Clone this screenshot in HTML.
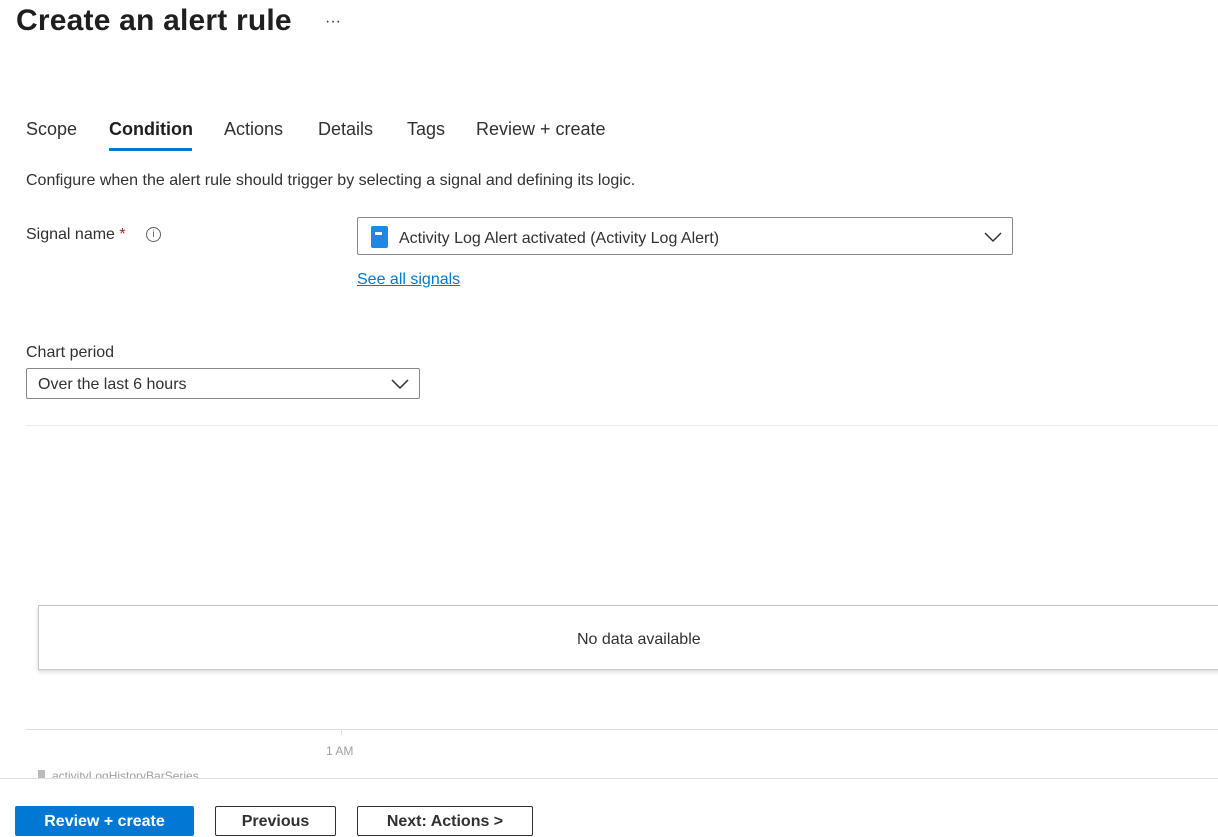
<!DOCTYPE html>
<html><head><style>
body{margin:0;width:1218px;height:830px;overflow:hidden;background:#fff;font-family:"Liberation Sans",sans-serif;color:#323130;position:relative}
.a{position:absolute;white-space:nowrap}
.tab{position:absolute;top:119px;font-size:18px;color:#323130}
.btn{position:absolute;top:806px;height:30px;box-sizing:border-box;border:1px solid #323130;border-radius:2px;font-size:16px;font-weight:bold;text-align:center;line-height:30px}
</style></head><body>
<div class="a" style="left:16px;top:4px;font-size:30px;font-weight:bold;color:#201f1e;letter-spacing:0.2px">Create an alert rule</div>
<div class="a" style="left:325px;top:13px;font-size:16px">···</div>
<div class="tab" style="left:26px">Scope</div>
<div class="tab" style="left:109px;font-weight:bold;color:#201f1e">Condition</div>
<div class="a" style="left:109px;top:148px;width:83px;height:3px;background:#0078d4"></div>
<div class="tab" style="left:224px">Actions</div>
<div class="tab" style="left:318px">Details</div>
<div class="tab" style="left:407px">Tags</div>
<div class="tab" style="left:476px">Review + create</div>
<div class="a" style="left:26px;top:172px;font-size:16px">Configure when the alert rule should trigger by selecting a signal and defining its logic.</div>
<div class="a" style="left:26px;top:226px;font-size:16px">Signal name <span style="color:#a4262c">*</span></div>
<div class="a" style="left:146px;top:227px;width:13px;height:13px;border:1px solid #605e5c;border-radius:50%;font-size:10px;text-align:center;line-height:13px;color:#605e5c">i</div>
<div class="a" style="left:357px;top:217px;width:656px;height:38px;box-sizing:border-box;border:1px solid #8a8886;border-radius:2px"></div>
<div class="a" style="left:371px;top:226px;width:17px;height:22px;background:#1e88e5;border-radius:2px"><div style="position:absolute;left:4px;top:6px;width:7px;height:3px;background:#fff"></div></div>
<div class="a" style="left:399px;top:230px;font-size:16px">Activity Log Alert activated (Activity Log Alert)</div>
<svg class="a" style="left:984px;top:231px" width="18" height="12"><path d="M1 2l8 8 8-8" fill="none" stroke="#323130" stroke-width="1.5"/></svg>
<div class="a" style="left:357px;top:271px;font-size:16px;color:#0078d4;text-decoration:underline">See all signals</div>
<div class="a" style="left:26px;top:344px;font-size:16px">Chart period</div>
<div class="a" style="left:26px;top:368px;width:394px;height:31px;box-sizing:border-box;border:1px solid #8a8886;border-radius:2px"></div>
<div class="a" style="left:38px;top:376px;font-size:16px">Over the last 6 hours</div>
<svg class="a" style="left:391px;top:378px" width="18" height="12"><path d="M1 2l8 8 8-8" fill="none" stroke="#323130" stroke-width="1.5"/></svg>
<div class="a" style="left:26px;top:425px;width:1192px;height:1px;background:#edebe9"></div>
<div class="a" style="left:38px;top:605px;width:1190px;height:63px;border:1px solid #c8c6c4;box-shadow:0 2px 4px rgba(0,0,0,.15);background:#fff"></div>
<div class="a" style="left:577px;top:631px;font-size:16px">No data available</div>
<div class="a" style="left:26px;top:729px;width:1192px;height:1px;background:#e1dfdd"></div>
<div class="a" style="left:341px;top:730px;width:1px;height:5px;background:#e1dfdd"></div>
<div class="a" style="left:326px;top:744px;font-size:12px;color:#a19f9d">1 AM</div>
<div class="a" style="left:38px;top:770px;width:7px;height:8px;background:#bbb"></div>
<div class="a" style="left:52px;top:769px;font-size:12px;color:#a19f9d;height:9px;overflow:hidden">activityLogHistoryBarSeries</div>
<div class="a" style="left:0;top:778px;width:1218px;height:52px;background:#fff;border-top:1px solid #e1dfdd"></div>
<div class="btn" style="left:15px;width:179px;background:#0078d4;border-color:#0078d4;color:#fff">Review + create</div>
<div class="btn" style="left:215px;width:121px;background:#fff">Previous</div>
<div class="btn" style="left:357px;width:176px;background:#fff">Next: Actions &gt;</div>
</body></html>
